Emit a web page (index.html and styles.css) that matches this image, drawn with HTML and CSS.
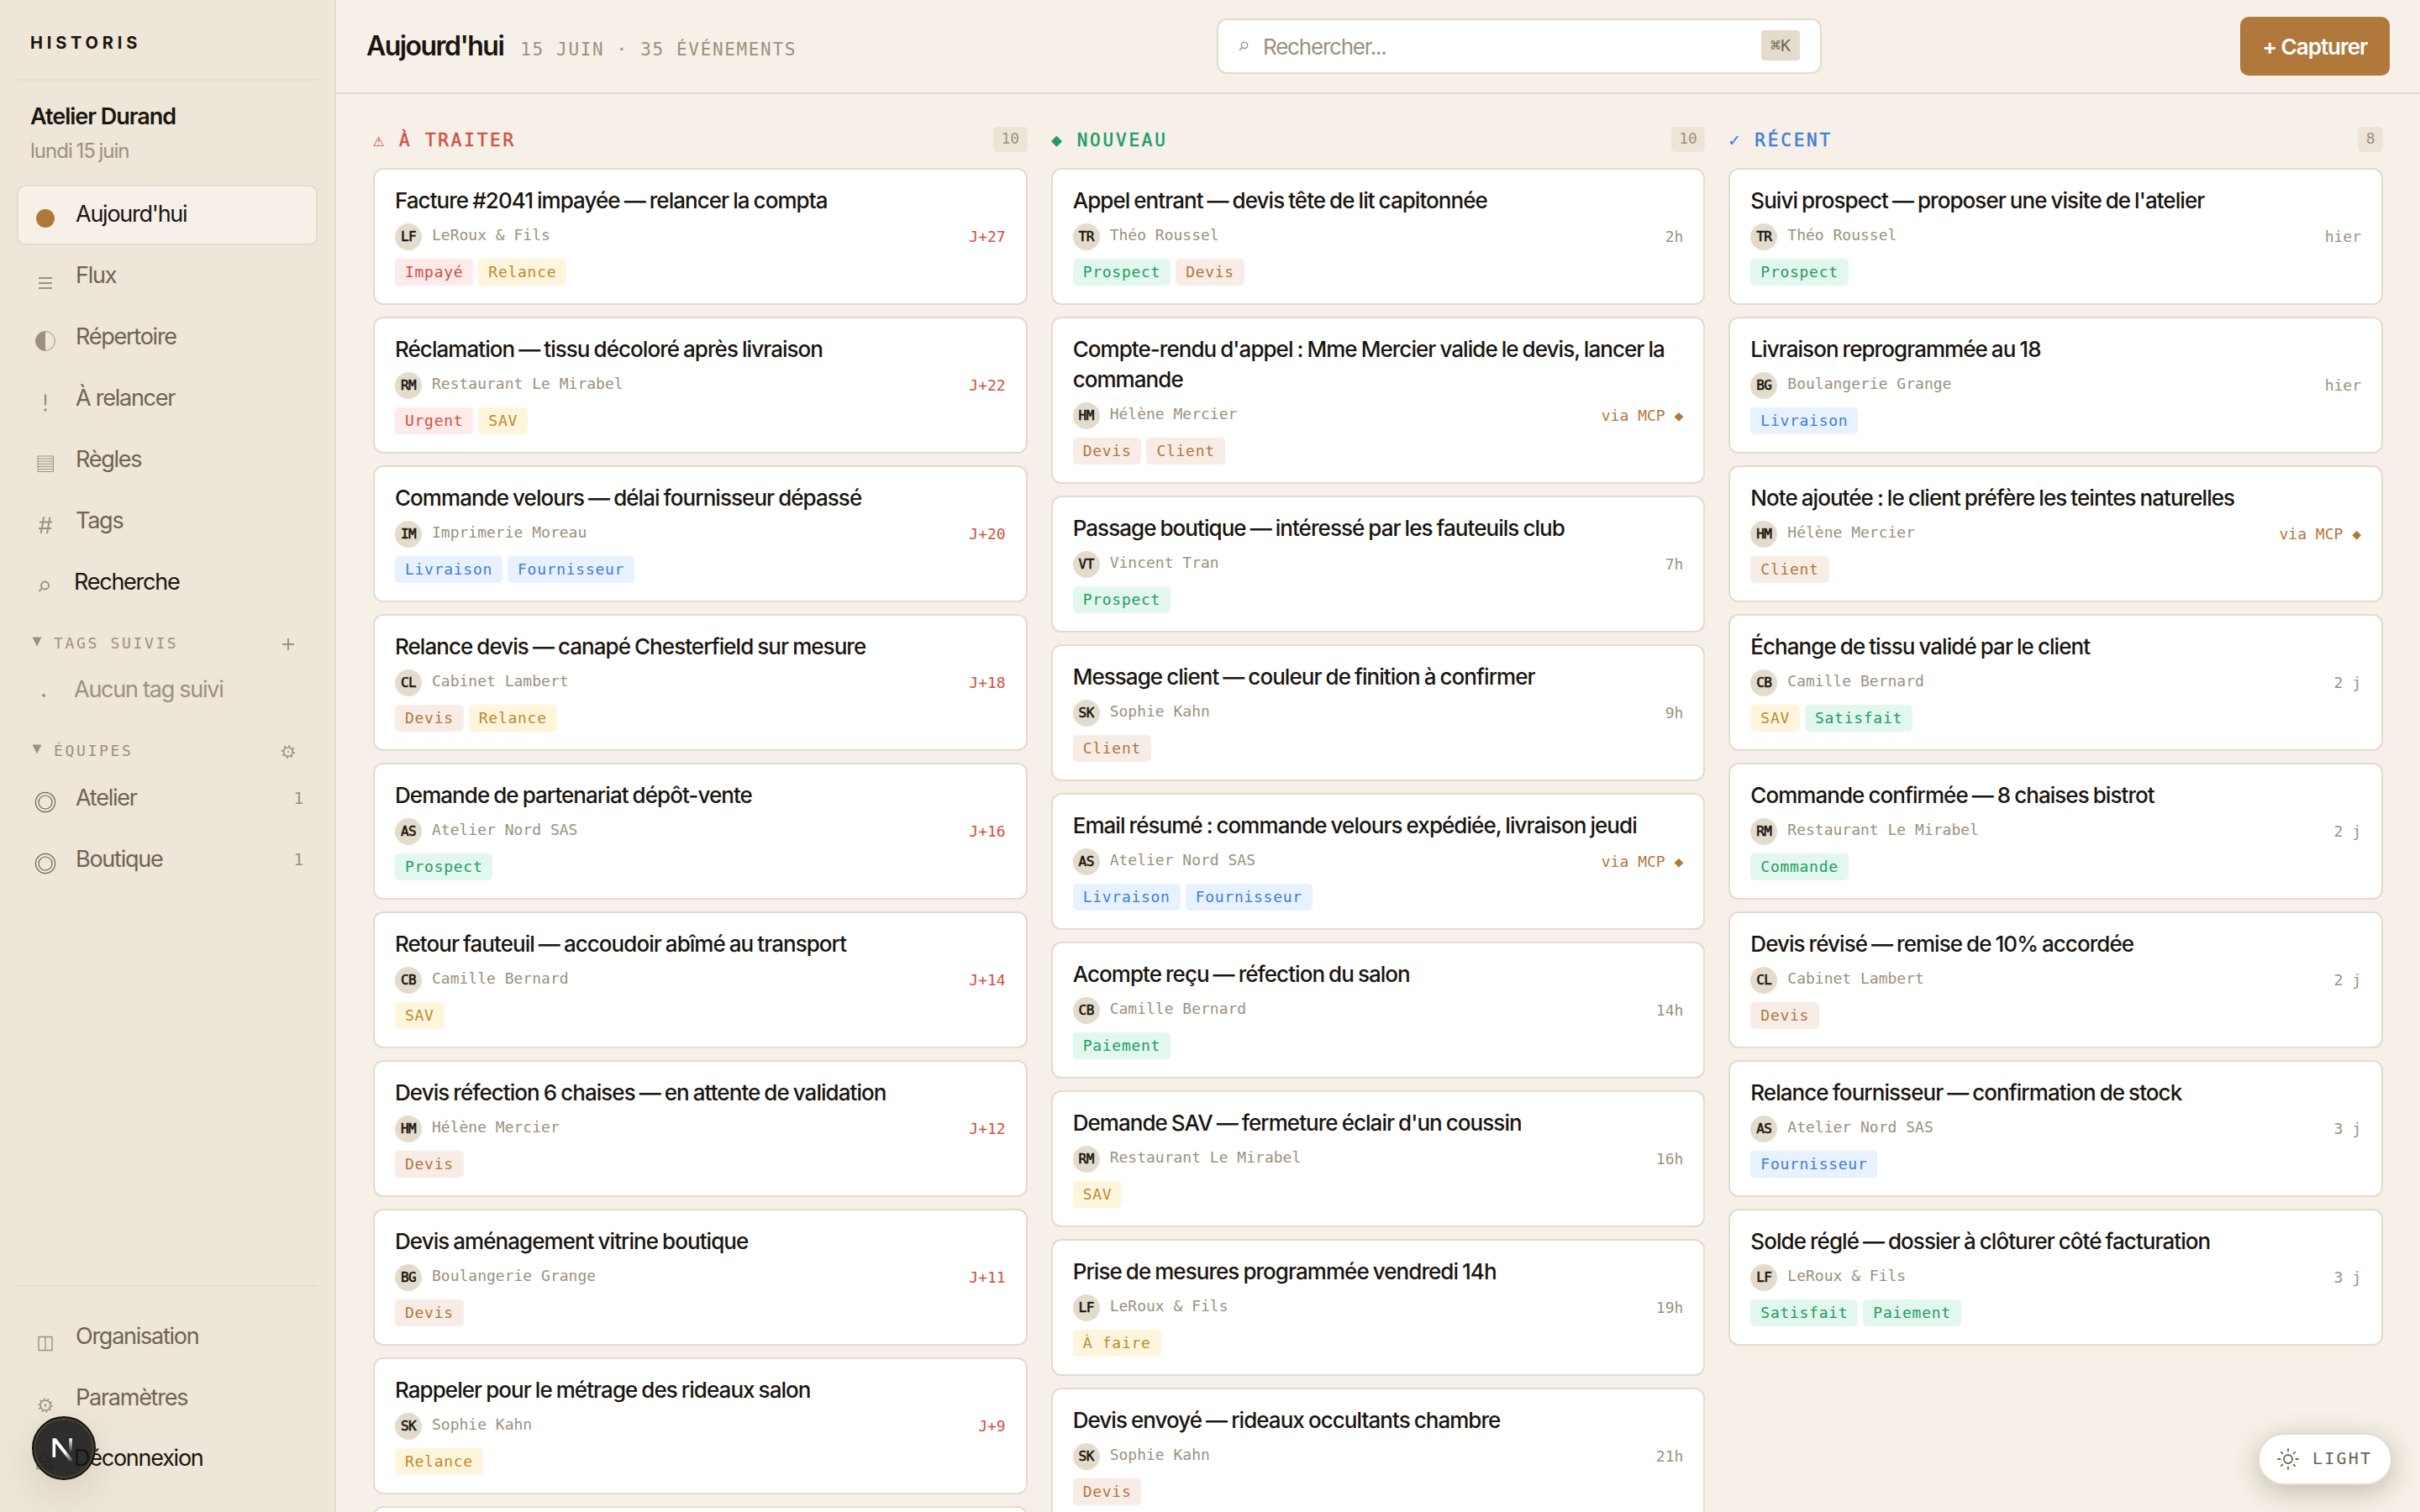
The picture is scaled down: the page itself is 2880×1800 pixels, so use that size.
FILE: index.html
```
<!DOCTYPE html>
<html lang="fr">
  <head>
    <meta charset="UTF-8" />
    <meta name="viewport" content="width=device-width, initial-scale=1" />
    <title>Historis — Aujourd'hui</title>
    <link rel="stylesheet" href="styles.css">
  </head>
  <body>
    <aside class="sidebar">
      <div class="brand">HISTORIS</div>
      <div class="workspace">
        <div class="workspace-name">Atelier Durand</div>
        <div class="workspace-date">lundi 15 juin</div>
      </div>

      <nav class="nav">
        <a class="nav-item active" href="#">
          <svg class="nav-icon" viewBox="0 0 28 28"><circle cx="14" cy="14" r="11" fill="#b1783c" /></svg>
          <span>Aujourd'hui</span>
        </a>
        <a class="nav-item" href="#">
          <svg class="nav-icon drop" viewBox="0 0 28 28"><path d="M6 8h16M6 14h16M6 20h16" stroke-width="2" /></svg>
          <span>Flux</span>
        </a>
        <a class="nav-item" href="#">
          <svg class="nav-icon" viewBox="0 0 28 28"><circle cx="14" cy="14" r="11.4" stroke-width="1" /><path d="M14 2.4a11.6 11.6 0 0 0 0 23.2z" fill="#9b917e" stroke="none" /></svg>
          <span>Répertoire</span>
        </a>
        <a class="nav-item" href="#">
          <svg class="nav-icon" viewBox="0 0 28 28"><path d="M14 4.5v13" stroke-width="2.4" /><circle cx="14" cy="23" r="1.8" fill="#9b917e" stroke="none" /></svg>
          <span>À relancer</span>
        </a>
        <a class="nav-item" href="#">
          <svg class="nav-icon" viewBox="0 0 28 28"><path d="M5 5h18.500v18.500h-18.500zM5 8.100h18M5 11.200h18M5 14.300h18M5 17.400h18M5 20.500h18" stroke-width="1" /></svg>
          <span>Règles</span>
        </a>
        <a class="nav-item" href="#">
          <svg class="nav-icon" viewBox="0 0 28 28"><path d="M12.200 4.500l-3.500 19.500M19.500 4.500l-3.500 19.500M7 10.500h15M6 18h15" stroke-width="1.900" /></svg>
          <span>Tags</span>
        </a>
        <a class="nav-item plain" href="#">
          <svg class="nav-icon" viewBox="0 0 28 28"><circle cx="13.500" cy="13" r="4.500" stroke-width="1.900" /><path d="M10.200 16.200L6.500 20" stroke-width="1.900" /></svg>
          <span>Recherche</span>
        </a>
      </nav>

      <div class="section">
        <svg class="caret" viewBox="0 0 12 12"><path d="M0.500 0.500h11L6 11.500z" /></svg>
        <span>TAGS SUIVIS</span>
        <svg class="section-action" viewBox="0 0 20 20"><path d="M10 3v14M3 10h14" stroke-width="1.900" /></svg>
      </div>
      <div class="empty"><i></i><span>Aucun tag suivi</span></div>

      <div class="section teams">
        <svg class="caret" viewBox="0 0 12 12"><path d="M0.500 0.500h11L6 11.500z" /></svg>
        <span>ÉQUIPES</span>
        <svg class="section-action" viewBox="0 0 20 20"><circle cx="10" cy="10" r="5.300" stroke-width="1.500" /><circle cx="10" cy="10" r="7" stroke-width="2" stroke-dasharray="2.200 3.300" /><circle cx="10" cy="10" r="1.100" fill="#9b917e" stroke="none" /></svg>
      </div>
      <nav class="nav team-list">
        <a class="nav-item" href="#">
          <svg class="nav-icon ring" viewBox="0 0 28 28"><circle cx="14" cy="14" r="11.600" /><circle cx="14" cy="14" r="8" /></svg>
          <span>Atelier</span><b>1</b>
        </a>
        <a class="nav-item" href="#">
          <svg class="nav-icon ring" viewBox="0 0 28 28"><circle cx="14" cy="14" r="11.600" /><circle cx="14" cy="14" r="8" /></svg>
          <span>Boutique</span><b>1</b>
        </a>
      </nav>

      <nav class="nav sidebar-footer">
        <a class="nav-item" href="#">
          <svg class="nav-icon drop" viewBox="0 0 28 28"><path d="M6 5.500h16v16h-16zM14 5.500v16" stroke-width="1.400" /></svg>
          <span>Organisation</span>
        </a>
        <a class="nav-item" href="#">
          <svg class="nav-icon drop" viewBox="0 0 28 28"><circle cx="14" cy="14" r="6" stroke-width="1.600" /><circle cx="14" cy="14" r="7.600" stroke-width="2" stroke-dasharray="1.800 2.975" /><circle cx="14" cy="14" r="1.400" fill="#9b917e" stroke="none" /></svg>
          <span>Paramètres</span>
        </a>
        <a class="nav-item plain" href="#">
          <svg class="nav-icon" viewBox="0 0 28 28"><path d="M13 3L22 13H4zM4 17.500h18v4h-18z" stroke-width="1.600" /></svg>
          <span>Déconnexion</span>
        </a>
      </nav>
    </aside>

    <main class="main">
      <header class="topbar">
        <div class="heading">
          <h1>Aujourd'hui</h1>
          <span>15 JUIN · 35 ÉVÉNEMENTS</span>
        </div>
        <div class="search">
          <svg viewBox="0 0 12 12"><circle cx="7" cy="4.800" r="3.700" /><path d="M4.300 7.500L1 10.800" /></svg>
          <span>Rechercher...</span>
          <kbd>⌘K</kbd>
        </div>
        <button class="capture" type="button">+ Capturer</button>
      </header>
      <div class="board" id="board"></div>
    </main>

    <div class="dev-badge">
      <svg viewBox="0 0 40 40">
        <defs>
          <linearGradient id="stem" x1="0" y1="0" x2="0" y2="1"><stop offset="0" stop-color="#fff" /><stop offset="1" stop-color="#fff" stop-opacity="0" /></linearGradient>
          <linearGradient id="slash" x1="0" y1="0" x2="1" y2="1"><stop offset="0.600" stop-color="#fff" /><stop offset="1" stop-color="#fff" stop-opacity="0" /></linearGradient>
        </defs>
        <path d="M5 32V7h4.600L32 35.500l-3.600 2.600L9 13.500V32z" fill="url(#slash)" />
        <rect x="27" y="7" width="4" height="19" fill="url(#stem)" />
      </svg>
    </div>

    <button class="theme-toggle" type="button">
      <svg viewBox="0 0 28 28"><circle cx="14" cy="14" r="5" /><path d="M14 2v2.500M14 23.500v2.500M2 14h2.500M23.500 14h2.500M5.800 5.800l1.600 1.600M20.600 20.600l1.600 1.600M5.800 22.200l1.600-1.600M20.600 7.400l1.600-1.600" /></svg>
      <span>LIGHT</span>
    </button>

    <script>
      const columns = [
        {
          key: "todo", icon: "⚠", title: "À TRAITER", count: 10,
          cards: [
            ["Facture #2041 impayée — relancer la compta", "LF", "LeRoux & Fils", "J+27", ["Impayé", "Relance"]],
            ["Réclamation — tissu décoloré après livraison", "RM", "Restaurant Le Mirabel", "J+22", ["Urgent", "SAV"]],
            ["Commande velours — délai fournisseur dépassé", "IM", "Imprimerie Moreau", "J+20", ["Livraison", "Fournisseur"]],
            ["Relance devis — canapé Chesterfield sur mesure", "CL", "Cabinet Lambert", "J+18", ["Devis", "Relance"]],
            ["Demande de partenariat dépôt-vente", "AS", "Atelier Nord SAS", "J+16", ["Prospect"]],
            ["Retour fauteuil — accoudoir abîmé au transport", "CB", "Camille Bernard", "J+14", ["SAV"]],
            ["Devis réfection 6 chaises — en attente de validation", "HM", "Hélène Mercier", "J+12", ["Devis"]],
            ["Devis aménagement vitrine boutique", "BG", "Boulangerie Grange", "J+11", ["Devis"]],
            ["Rappeler pour le métrage des rideaux salon", "SK", "Sophie Kahn", "J+9", ["Relance"]],
            ["", "", "", "", []],
          ],
        },
        {
          key: "new", icon: "◆", title: "NOUVEAU", count: 10,
          cards: [
            ["Appel entrant — devis tête de lit capitonnée", "TR", "Théo Roussel", "2h", ["Prospect", "Devis"]],
            ["Compte-rendu d'appel : Mme Mercier valide le devis, lancer la commande", "HM", "Hélène Mercier", "via MCP ◆", ["Devis", "Client"]],
            ["Passage boutique — intéressé par les fauteuils club", "VT", "Vincent Tran", "7h", ["Prospect"]],
            ["Message client — couleur de finition à confirmer", "SK", "Sophie Kahn", "9h", ["Client"]],
            ["Email résumé : commande velours expédiée, livraison jeudi", "AS", "Atelier Nord SAS", "via MCP ◆", ["Livraison", "Fournisseur"]],
            ["Acompte reçu — réfection du salon", "CB", "Camille Bernard", "14h", ["Paiement"]],
            ["Demande SAV — fermeture éclair d'un coussin", "RM", "Restaurant Le Mirabel", "16h", ["SAV"]],
            ["Prise de mesures programmée vendredi 14h", "LF", "LeRoux & Fils", "19h", ["À faire"]],
            ["Devis envoyé — rideaux occultants chambre", "SK", "Sophie Kahn", "21h", ["Devis"]],
          ],
        },
        {
          key: "recent", icon: "✓", title: "RÉCENT", count: 8,
          cards: [
            ["Suivi prospect — proposer une visite de l'atelier", "TR", "Théo Roussel", "hier", ["Prospect"]],
            ["Livraison reprogrammée au 18", "BG", "Boulangerie Grange", "hier", ["Livraison"]],
            ["Note ajoutée : le client préfère les teintes naturelles", "HM", "Hélène Mercier", "via MCP ◆", ["Client"]],
            ["Échange de tissu validé par le client", "CB", "Camille Bernard", "2 j", ["SAV", "Satisfait"]],
            ["Commande confirmée — 8 chaises bistrot", "RM", "Restaurant Le Mirabel", "2 j", ["Commande"]],
            ["Devis révisé — remise de 10% accordée", "CL", "Cabinet Lambert", "2 j", ["Devis"]],
            ["Relance fournisseur — confirmation de stock", "AS", "Atelier Nord SAS", "3 j", ["Fournisseur"]],
            ["Solde réglé — dossier à clôturer côté facturation", "LF", "LeRoux & Fils", "3 j", ["Satisfait", "Paiement"]],
          ],
        },
      ];

      const tagColors = {
        "Impayé": "red", "Urgent": "red",
        "Relance": "yellow", "SAV": "yellow", "À faire": "yellow",
        "Livraison": "blue", "Fournisseur": "blue",
        "Prospect": "green", "Paiement": "green", "Satisfait": "green", "Commande": "green",
        "Devis": "brown", "Client": "brown",
      };

      const timeClass = (time) =>
        time.startsWith("J+") ? "late" : time.startsWith("via") ? "mcp" : "";

      const renderCard = ([title, initials, who, time, tags]) => `
        <article class="card">
          <h3>${title}</h3>
          <div class="meta">
            <span class="avatar">${initials}</span>
            <span class="who">${who.replace("&", "&amp;")}</span>
            <span class="time ${timeClass(time)}">${time}</span>
          </div>
          <div class="tags">${tags.map((t) => `<span class="tag ${tagColors[t]}">${t}</span>`).join("")}</div>
        </article>`;

      document.getElementById("board").innerHTML = columns.map((col) => `
        <section class="column ${col.key}">
          <div class="column-head">
            <span class="column-icon">${col.icon}</span>
            <h2>${col.title}</h2>
            <span class="count">${col.count}</span>
          </div>
          ${col.cards.map(renderCard).join("")}
        </section>`).join("");
    </script>
  </body>
</html>
```
FILE: styles.css
```
:root {
  --bg: #f6f0e8;
  --side: #eee6d8;
  --line: #e3dccd;
  --ink: #1a1510;
  --text: #6e6452;
  --muted: #9b917e;
  --accent: #b1783c;
  --sans: Inter, "Liberation Sans", sans-serif;
  --mono: "DejaVu Sans Mono", "Liberation Mono", monospace;
}

* {
  box-sizing: border-box;
}

body {
  margin: 0;
  display: flex;
  width: 2880px;
  height: 1800px;
  overflow: hidden;
  background: var(--bg);
  color: var(--ink);
  font-family: var(--sans);
}

h1,
h2,
h3 {
  margin: 0;
}

/* Sidebar */
.sidebar {
  flex: none;
  display: flex;
  flex-direction: column;
  width: 400px;
  padding: 0 20px 28px;
  background: var(--side);
  border-right: 2px solid var(--line);
}
.brand {
  height: 96px;
  padding: 37px 16px 0;
  border-bottom: 2px solid #e6decf;
  font-size: 20px;
  font-weight: 700;
  line-height: 28px;
  letter-spacing: 4.8px;
}
.workspace {
  height: 124px;
  padding: 26px 16px 0;
}
.workspace-name {
  font-size: 27px;
  font-weight: 600;
  line-height: 34px;
  letter-spacing: -1px;
}
.workspace-date {
  margin-top: 8px;
  color: var(--muted);
  font-size: 24px;
  line-height: 32px;
  letter-spacing: -1px;
  word-spacing: -1px;
}
.nav {
  display: flex;
  flex-direction: column;
  gap: 1px;
}
.nav-item {
  display: flex;
  align-items: center;
  height: 72px;
  padding: 0 18px;
  border: 2px solid transparent;
  border-radius: 10px;
  color: var(--text);
  font-size: 27px;
  letter-spacing: -1.25px;
  text-decoration: none;
}
.nav-item span {
  padding-bottom: 3px;
}
.nav-item.active {
  background: var(--bg);
  border-color: var(--line);
  color: var(--ink);
}
.nav-item.plain {
  color: var(--ink);
}
.nav-item.plain span {
  margin-left: -2px;
}
.nav-item b {
  margin: 0 -2px 3px auto;
  color: var(--muted);
  font: 400 20px var(--mono);
}
.nav-icon {
  width: 28px;
  height: 28px;
  margin: 8px 22px 0 0;
  fill: none;
  stroke: var(--muted);
}
.nav-item.active .nav-icon {
  stroke: none;
}
.nav-icon.drop {
  margin-top: 15px;
}
.nav-icon.ring {
  stroke: var(--text);
  stroke-width: 1.2;
}
.section {
  display: flex;
  align-items: center;
  height: 40px;
  margin-top: 16px;
  padding: 0 16px 0 18px;
  color: var(--muted);
  font: 18px var(--mono);
  letter-spacing: 2.65px;
}
.section span {
  padding-bottom: 1px;
}
.caret {
  width: 12px;
  height: 12px;
  margin: -4px 14px 0 0;
  fill: var(--muted);
}
.section-action {
  width: 20px;
  height: 20px;
  margin: 2px 9px 0 auto;
  fill: none;
  stroke: var(--muted);
}
.empty {
  display: flex;
  align-items: center;
  height: 70px;
  padding-left: 30px;
  color: var(--muted);
  font-size: 27px;
  letter-spacing: -1.25px;
}
.empty span {
  padding-bottom: 1px;
}
.empty i {
  width: 4px;
  height: 4px;
  margin: 14px 34px 0 0;
  border-radius: 50%;
  background: var(--muted);
}
.section.teams {
  margin-top: 18px;
}
.team-list {
  margin-top: 1px;
}
.sidebar-footer {
  margin-top: auto;
  padding-top: 24px;
  border-top: 2px solid #e6decf;
}
.sidebar-footer .plain {
  height: 70px;
}

/* Topbar */
.main {
  flex: 1;
  min-width: 0;
}
.topbar {
  display: flex;
  align-items: center;
  justify-content: space-between;
  height: 112px;
  padding: 0 36px;
  border-bottom: 2px solid var(--line);
}
.heading {
  display: flex;
  align-items: baseline;
  gap: 20px;
  padding-bottom: 1px;
}
.heading h1 {
  font-size: 32px;
  font-weight: 600;
  letter-spacing: -1.55px;
}
.heading span {
  color: var(--muted);
  font: 21px var(--mono);
  letter-spacing: 1.65px;
}
.search {
  display: flex;
  align-items: center;
  width: 720px;
  height: 66px;
  margin-left: 2px;
  padding: 0 24px;
  background: #fff;
  border: 2px solid var(--line);
  border-radius: 12px;
  color: var(--muted);
  font-size: 26px;
  letter-spacing: -1.2px;
}
.search svg {
  width: 12px;
  height: 12px;
  margin-right: 17px;
  fill: none;
  stroke: var(--muted);
  stroke-width: 1.4;
}
.search kbd {
  display: flex;
  align-items: center;
  height: 36px;
  margin: 0 0 2px auto;
  padding: 0 11px;
  background: var(--line);
  border-radius: 4px;
  color: var(--text);
  font: 20px var(--mono);
  letter-spacing: 0;
}
.capture {
  width: 178px;
  height: 70px;
  padding: 0;
  background: var(--accent);
  border: 0;
  border-radius: 10px;
  color: #fff;
  font: 600 26px var(--sans);
  letter-spacing: -1px;
}

/* Board */
.board {
  display: grid;
  grid-template-columns: repeat(3, minmax(0, 1fr));
  gap: 28px;
  height: 1688px;
  padding: 32px 44px 0;
  overflow: hidden;
}
.column {
  display: flex;
  flex-direction: column;
  gap: 14px;
}
.column-head {
  display: flex;
  align-items: center;
  height: 42px;
  font: 22px var(--mono);
}
.column-head h2 {
  margin-top: 3px;
  font: inherit;
  font-size: 21px;
  letter-spacing: 2.8px;
  -webkit-text-stroke: 0.5px;
}
.column-icon {
  width: 31px;
  padding-top: 3px;
}
.todo .column-head {
  color: #cf5141;
}
.new .column-head {
  color: #1f9d63;
}
.recent .column-head {
  color: #3f7ed6;
}
.column-head .count {
  height: 30px;
  margin: 2px 0 0 auto;
  padding: 0 9.5px;
  background: #ece5d7;
  border-radius: 5px;
  color: var(--muted);
  font-size: 18px;
  line-height: 28px;
}
.card {
  flex: none;
  min-height: 163px;
  padding: 20px 24px;
  background: #fff;
  border: 2px solid var(--line);
  border-radius: 12px;
}
.card h3 {
  position: relative;
  top: -1px;
  font-size: 26px;
  font-weight: 450;
  line-height: 36px;
  letter-spacing: -0.95px;
  word-spacing: -1px;
}
.meta {
  display: flex;
  align-items: center;
  height: 32px;
  margin: 8px 0 10px;
  font: 18px/24px var(--mono);
}
.tags {
  display: flex;
  gap: 6px;
  padding-bottom: 1px;
}
.avatar {
  display: flex;
  align-items: center;
  justify-content: center;
  width: 32px;
  height: 32px;
  margin-right: 12px;
  background: var(--line);
  border-radius: 50%;
  font-size: 16px;
  letter-spacing: -0.6px;
  -webkit-text-stroke: 0.6px;
}
.who {
  margin-top: -4px;
  color: var(--muted);
}
.time {
  margin-left: auto;
  color: var(--muted);
}
.time.late {
  color: #cf5141;
}
.time.mcp {
  color: var(--accent);
}
.tag {
  height: 32px;
  padding: 0 12px;
  border-radius: 5px;
  font: 18px/31px var(--mono);
  letter-spacing: 0.72px;
}
.tag.red {
  background: #fdeaea;
  color: #cf5141;
}
.tag.yellow {
  background: #fff5dd;
  color: #bd8a2c;
}
.tag.green {
  background: #e2f7ee;
  color: #1f9d63;
}
.tag.blue {
  background: #e7f1ff;
  color: #3f7ed6;
}
.tag.brown {
  background: #f7ede6;
  color: var(--accent);
}

/* Floating controls */
.dev-badge {
  position: absolute;
  left: 38px;
  top: 1686px;
  display: flex;
  align-items: center;
  justify-content: center;
  width: 76px;
  height: 76px;
  background: rgba(20, 20, 20, 0.88);
  border: 2px solid #15120e;
  border-radius: 50%;
  box-shadow: inset 0 0 0 2px #4a443a, 0 16px 48px rgba(90, 80, 50, 0.16);
}
.dev-badge svg {
  width: 36px;
  height: 36px;
}
.theme-toggle {
  position: absolute;
  right: 33px;
  bottom: 32px;
  display: flex;
  align-items: center;
  width: 160px;
  height: 62px;
  padding: 0 0 0 20px;
  background: #fff;
  border: 2px solid var(--line);
  border-radius: 31px;
  box-shadow: 0 8px 32px rgba(60, 55, 30, 0.28);
  color: var(--text);
  font: 20px var(--mono);
  letter-spacing: 2.2px;
}
.theme-toggle svg {
  width: 28px;
  height: 28px;
  margin-right: 15px;
  fill: none;
  stroke: var(--text);
  stroke-width: 1.8;
  stroke-linecap: round;
}
.theme-toggle span {
  padding-bottom: 2px;
}
```
